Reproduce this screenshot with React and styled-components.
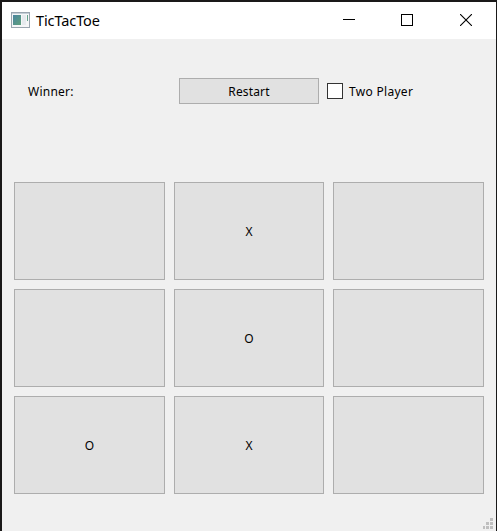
import React, { useState } from "react";
import styled, { createGlobalStyle } from "styled-components";

const GlobalStyle = createGlobalStyle`
  * { box-sizing: border-box; }
  body { margin: 0; background: #1b1b1b; overflow: hidden; }
`;

const Frame = styled.div`
  width: 497px;
  height: 531px;
  padding: 2px 1px 0 2px;
  background: #1a1919;
`;

const Window = styled.main`
  position: relative;
  height: 529px;
  display: flex;
  flex-direction: column;
  background: #f0f0f0;
  color: #000;
  font: 12px/16px "Noto Sans", "Open Sans", sans-serif;
`;

const TitleBar = styled.header`
  height: 37px;
  display: flex;
  align-items: flex-start;
  padding-left: 9px;
  background: #fff;
`;

const AppIcon = styled.svg`
  display: block;
  width: 19px;
  height: 16px;
  margin: 10px 6px 0 0;
`;

const Title = styled.h1`
  flex: 1;
  margin: 8px 0 0;
  font: 400 14.5px/20px "Noto Sans", "Open Sans", sans-serif;
  letter-spacing: -0.1px;
`;

const Captions = styled.div`
  display: flex;
`;

const Caption = styled.button`
  width: ${(p) => p.$width || 58}px;
  height: 36px;
  padding: 0;
  border: 0;
  background: transparent;
  display: grid;
  place-items: center;
  svg { display: block; }
`;

const Toolbar = styled.section`
  height: 26px;
  margin-top: 39px;
  display: flex;
  align-items: center;
`;

const Label = styled.span`
  display: inline-block;
  padding-top: 2px;
  letter-spacing: ${(p) => p.$spacing || 0}px;
`;

const Status = styled.div`
  width: 177px;
  padding-left: 26px;
`;

const PushButton = styled.button`
  padding: 0;
  border: 1px solid #adadad;
  background: #e1e1e1;
  color: #000;
  font: inherit;
`;

const Restart = styled(PushButton)`
  width: 140px;
  height: 26px;
`;

const CheckLabel = styled.label`
  display: flex;
  align-items: center;
  gap: 6px;
  margin-left: 8px;
`;

const CheckBox = styled.input`
  appearance: none;
  width: 16px;
  height: 16px;
  margin: 0;
  border: 1px solid #333;
  background: #fff;
  &:checked { box-shadow: inset 0 0 0 3px #fff; background: #333; }
`;

const Board = styled.section`
  display: grid;
  grid-template-columns: 151px 150px 151px;
  grid-auto-rows: 98px;
  gap: 9px;
  margin: 78px 0 0 12px;
`;

const Cell = styled(PushButton)`
  padding-top: 1px;
`;

const SizeGrip = styled.svg`
  position: absolute;
  right: 3px;
  bottom: 2px;
  width: 10px;
  height: 11px;
`;

const initial = ["", "X", "", "", "O", "", "O", "X", ""];

export default function App() {
  const [cells, setCells] = useState(initial);
  return (
    <Frame>
      <GlobalStyle />
      <Window>
        <TitleBar>
          <AppIcon viewBox="0 0 19 16" aria-hidden="true">
            <defs>
              <linearGradient id="screen" x1="0" y1="0" x2="1" y2="1">
                <stop stopColor="#4b85a0" />
                <stop offset="1" stopColor="#5fa07b" />
              </linearGradient>
            </defs>
            <rect x=".5" y=".5" width="18" height="15" fill="#f5f6f7" stroke="#9aa5af" />
            <path d="M1 1.5h17" stroke="#c5ced6" />
            <rect x="2" y="3" width="8" height="10" fill="url(#screen)" />
            <rect x="11" y="3" width="4" height="10" fill="#e6eaed" />
            <path d="M16.5 3v6" stroke="#66a38b" />
          </AppIcon>
          <Title>TicTacToe</Title>
          <Captions>
            <Caption aria-label="Minimize">
              <svg width="12" height="12"><path d="M0 5.5h12" stroke="#000" /></svg>
            </Caption>
            <Caption aria-label="Maximize">
              <svg width="12" height="12"><rect x=".5" y=".5" width="11" height="11" fill="none" stroke="#000" /></svg>
            </Caption>
            <Caption aria-label="Close" $width={60}>
              <svg width="12" height="12"><path d="m0 0 12 12M12 0 0 12" stroke="#000" strokeWidth="1.1" /></svg>
            </Caption>
          </Captions>
        </TitleBar>
        <Toolbar>
          <Status><Label $spacing={0.25}>Winner:</Label></Status>
          <Restart onClick={() => setCells(Array(9).fill(""))}><Label $spacing={0.15}>Restart</Label></Restart>
          <CheckLabel><CheckBox type="checkbox" /><Label $spacing={0.3}>Two Player</Label></CheckLabel>
        </Toolbar>
        <Board>
          {cells.map((mark, i) => <Cell key={i}>{mark}</Cell>)}
        </Board>
        <SizeGrip viewBox="0 0 10 11" fill="#bfbfbf" aria-hidden="true">
          <path d="M7 0h3v3H7zM3 4h3v3H3zM7 4h3v3H7zM0 8h2v3H0zM3 8h3v3H3zM7 8h3v3H7z" />
        </SizeGrip>
      </Window>
    </Frame>
  );
}
